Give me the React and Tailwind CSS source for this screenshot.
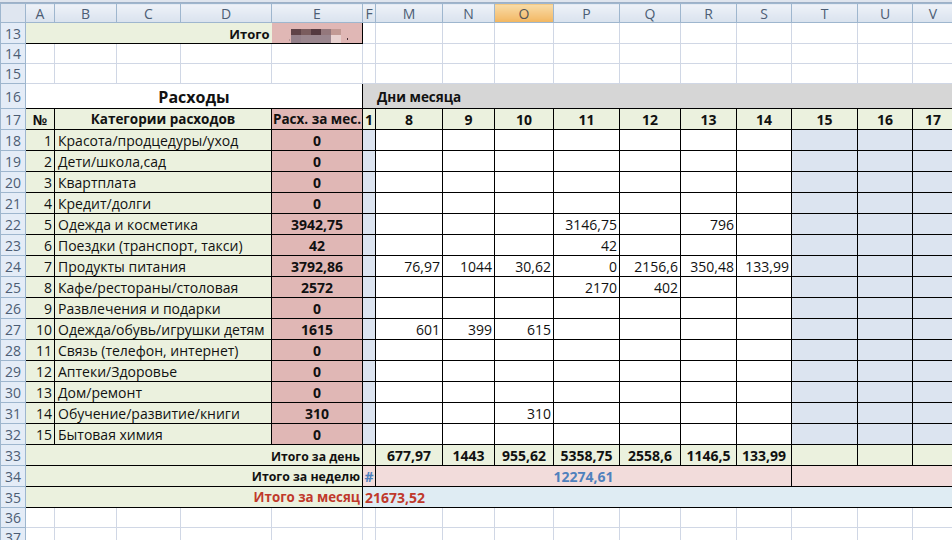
const columns = [
  { name: "A", width: 29 },
  { name: "B", width: 62 },
  { name: "C", width: 64 },
  { name: "D", width: 91 },
  { name: "E", width: 91 },
  { name: "F", width: 13 },
  { name: "M", width: 67 },
  { name: "N", width: 52 },
  { name: "O", width: 59 },
  { name: "P", width: 66 },
  { name: "Q", width: 61 },
  { name: "R", width: 56 },
  { name: "S", width: 55 },
  { name: "T", width: 66 },
  { name: "U", width: 55 },
  { name: "V", width: 41 },
];

const categories = [
  ["Красота/продцедуры/уход", "0", {}],
  ["Дети/школа,сад", "0", {}],
  ["Квартплата", "0", {}],
  ["Кредит/долги", "0", {}],
  ["Одежда и косметика", "3942,75", { P: "3146,75", R: "796" }],
  ["Поездки (транспорт, такси)", "42", { P: "42" }],
  ["Продукты питания", "3792,86", { M: "76,97", N: "1044", O: "30,62", P: "0", Q: "2156,6", R: "350,48", S: "133,99" }],
  ["Кафе/рестораны/столовая", "2572", { P: "2170", Q: "402" }],
  ["Развлечения и подарки", "0", {}],
  ["Одежда/обувь/игрушки детям", "1615", { M: "601", N: "399", O: "615" }],
  ["Связь (телефон, интернет)", "0", {}],
  ["Аптеки/Здоровье", "0", {}],
  ["Дом/ремонт", "0", {}],
  ["Обучение/развитие/книги", "310", { O: "310" }],
  ["Бытовая химия", "0", {}],
];

const dayCols = ["M", "N", "O", "P", "Q", "R", "S"];
const dayNums = ["8", "9", "10", "11", "12", "13", "14"];
const dayTotals = ["677,97", "1443", "955,62", "5358,75", "2558,6", "1146,5", "133,99"];
const nextDays = ["15", "16", "17"];

const RowHead = ({ children }) => (
  <td className="bg-[#e4ecf7] border border-[#9eb6ce] text-center text-[#4c5d74] text-[14px] font-normal p-0 overflow-hidden">
    {children}
  </td>
);

const Blank = ({ count = 1 }) =>
  Array.from({ length: count }).map((_, i) => (
    <td key={i} className="border border-[#d0d7e5] p-0"></td>
  ));

const Smudge = () => (
  <svg width="91" height="20" viewBox="0 0 91 20" className="block blur-[0.7px]">
    <rect x="19" y="6" width="10" height="6" fill="#5f4348" />
    <rect x="29" y="6" width="10" height="6" fill="#7a5c5e" />
    <rect x="39" y="6" width="10" height="6" fill="#553a40" />
    <rect x="49" y="6" width="10" height="6" fill="#94787c" />
    <rect x="59" y="6" width="10" height="6" fill="#c29a94" />
    <rect x="19" y="12" width="10" height="8" fill="#94808a" />
    <rect x="29" y="12" width="30" height="8" fill="#9a868e" />
    <rect x="59" y="12" width="10" height="8" fill="#e8d2d0" />
    <rect x="17" y="16" width="1" height="2" fill="#b89898" />
    <rect x="75" y="15" width="1" height="2" fill="#4a3038" />
  </svg>
);

export default function App() {
  return (
    <div className="w-[952px] h-[540px] overflow-hidden bg-white font-['Open_Sans','Liberation_Sans',sans-serif] text-[14px] text-[#111] leading-none">
      <div className="h-[3px] bg-[#dfe5ee] border-b border-[#9eb0c6]"></div>
      <table className="table-fixed border-collapse w-[952px] [&_td]:pt-px">
        <colgroup>
          <col className="w-[25px]" />
          {columns.map((c) => (
            <col key={c.name} style={{ width: c.width }} />
          ))}
        </colgroup>
        <tbody>
          <tr className="h-[19px]">
            <td className="bg-[#dfe6f0] border border-[#9eb6ce] p-0"></td>
            {columns.map((c) => (
              <td
                key={c.name}
                className={
                  c.name === "O"
                    ? "bg-gradient-to-b from-[#f8dca8] to-[#f2b65f] border border-[#9eb6ce] text-center text-[#555] text-[14px] p-0"
                    : "bg-gradient-to-b from-[#eef2f8] to-[#d9e2ee] border border-[#9eb6ce] text-center text-[#4c5d74] text-[14px] p-0"
                }
              >
                {c.name}
              </td>
            ))}
          </tr>

          <tr className="h-[21px]">
            <RowHead>13</RowHead>
            <td colSpan={4} className="bg-[#ebf1de] border-b border-black text-right text-[13px] font-bold pr-[2px] !pt-[3px] p-0">Итого</td>
            <td className="bg-[#e0b7b5] border-b border-r border-black !pt-0 p-0"><Smudge /></td>
            <Blank count={columns.length - 5} />
          </tr>
          <tr className="h-[20px]">
            <RowHead>14</RowHead>
            <Blank count={columns.length} />
          </tr>
          <tr className="h-[20px]">
            <RowHead>15</RowHead>
            <Blank count={columns.length} />
          </tr>

          <tr className="h-[25px]">
            <RowHead>16</RowHead>
            <td colSpan={5} className="border border-black text-center font-bold text-[16px] p-0">Расходы</td>
            <td colSpan={11} className="bg-[#d6d6d6] border-b border-black font-bold text-[13.5px] pl-[14px] !pt-[4px] p-0">Дни месяца</td>
          </tr>

          <tr className="h-[21px] font-bold [&>td]:!pt-[2px]">
            <RowHead>17</RowHead>
            <td className="bg-[#ebf1de] border border-black text-center p-0">№</td>
            <td colSpan={3} className="bg-[#ebf1de] border border-black text-center text-[13.5px] p-0">Категории расходов</td>
            <td className="bg-[#e0b7b5] border border-black text-center text-[13.5px] p-0 whitespace-nowrap">Расх. за мес.</td>
            <td className="bg-[#ebf1de] border border-black text-center p-0">1</td>
            {dayNums.map((d) => (
              <td key={d} className="bg-[#ebf1de] border border-black text-center p-0">{d}</td>
            ))}
            {nextDays.map((d) => (
              <td key={d} className="bg-[#ebf1de] border border-black text-center p-0">{d}</td>
            ))}
          </tr>

          {categories.map(([name, total, days], i) => (
            <tr key={name} className="h-[21px]">
              <RowHead>{18 + i}</RowHead>
              <td className="bg-[#ebf1de] border border-black text-right pr-[2px] p-0">{i + 1}</td>
              <td colSpan={3} className="bg-[#ebf1de] border border-black pl-[3px] p-0 whitespace-nowrap">{name}</td>
              <td className="bg-[#e0b7b5] border border-black text-center font-bold p-0">{total}</td>
              <td className="bg-[#dce4f0] border border-black p-0"></td>
              {dayCols.map((c) => (
                <td key={c} className="border border-black text-right pr-[2px] p-0">{days[c]}</td>
              ))}
              {nextDays.map((d) => (
                <td key={d} className="bg-[#dce4f0] border border-black p-0"></td>
              ))}
            </tr>
          ))}

          <tr className="h-[21px] font-bold">
            <RowHead>33</RowHead>
            <td colSpan={5} className="bg-[#ebf1de] border border-black text-right text-[12.2px] pr-[2px] !pt-[4px] p-0">Итого за день</td>
            <td className="bg-[#ebf1de] border border-black p-0"></td>
            {dayTotals.map((d) => (
              <td key={d} className="bg-[#ebf1de] border border-black text-center p-0 whitespace-nowrap">{d}</td>
            ))}
            {nextDays.map((d) => (
              <td key={d} className="bg-[#ebf1de] border border-black p-0"></td>
            ))}
          </tr>
          <tr className="h-[21px] font-bold">
            <RowHead>34</RowHead>
            <td colSpan={5} className="bg-[#ebf1de] border border-black text-right text-[12.3px] pr-[2px] !pt-[3px] p-0">Итого за неделю</td>
            <td className="bg-[#f2dcdb] border border-black text-center text-[#4f81bd] p-0">#</td>
            <td colSpan={7} className="bg-[#f2dcdb] border border-black text-center text-[#4f81bd] p-0">12274,61</td>
            <td colSpan={3} className="bg-[#f2dcdb] border-y border-l border-black p-0"></td>
          </tr>
          <tr className="h-[21px] font-bold">
            <RowHead>35</RowHead>
            <td colSpan={5} className="bg-[#ebf1de] border border-black text-right text-[13.3px] text-[#c0392b] pr-[2px] p-0">Итого за месяц</td>
            <td colSpan={11} className="bg-[#dfecf3] border-y border-l border-black text-[#c0392b] pl-[2px] p-0">21673,52</td>
          </tr>
          <tr className="h-[20px]">
            <RowHead>36</RowHead>
            <Blank count={columns.length} />
          </tr>
          <tr className="h-[20px]">
            <RowHead>37</RowHead>
            <Blank count={columns.length} />
          </tr>
        </tbody>
      </table>
    </div>
  );
}
